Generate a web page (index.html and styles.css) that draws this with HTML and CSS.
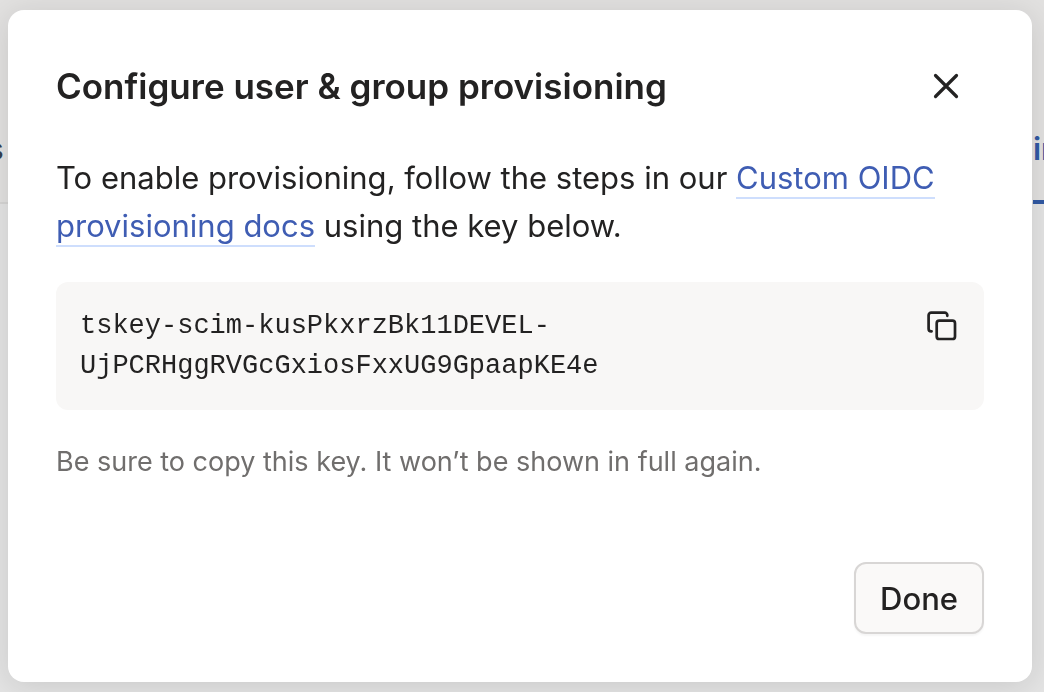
FILE: index.html
```html
<!DOCTYPE html>
<html lang="en">
<head>
    <meta charset="UTF-8">
    <meta name="viewport" content="width=device-width, initial-scale=1.0">
    <title>Configure user &amp; group provisioning</title>
    <link rel="stylesheet" href="styles.css">
</head>
<body>
    <nav class="tabs">
        <a class="tab" href="#">s</a>
        <a class="tab tab-active" href="#">in</a>
    </nav>
    <div class="overlay">
        <div class="dialog" role="dialog" aria-labelledby="dialogTitle">
            <header class="dialog-header">
                <h1 id="dialogTitle">Configure user &amp; group provisioning</h1>
                <button type="button" class="icon-button close-button" aria-label="Close">
                    <svg width="28" height="28" viewBox="0 0 28 28" fill="none" stroke="currentColor" stroke-width="3.2" stroke-linecap="round">
                        <path d="M3.5 3.5l21 21M24.5 3.5l-21 21"/>
                    </svg>
                </button>
            </header>
            <p class="intro">To enable provisioning, follow the steps in our <a href="#">Custom OIDC provisioning docs</a> using the key below.</p>
            <div class="key-box">
                <code>tskey-scim-kusPkxrzBk11DEVEL-<wbr>UjPCRHggRVGcGxiosFxxUG9GpaapKE4e</code>
                <button type="button" class="icon-button" aria-label="Copy key">
                    <svg width="32" height="32" viewBox="0 0 32 32" fill="none" stroke="currentColor" stroke-width="2.7" stroke-linecap="round" stroke-linejoin="round">
                        <rect x="10.7" y="10.7" width="18.3" height="18.3" rx="2.6"/>
                        <path d="M5.6 21.3H5.2a2.6 2.6 0 0 1-2.6-2.6V5.2a2.6 2.6 0 0 1 2.6-2.6h13.5a2.6 2.6 0 0 1 2.6 2.6v.6"/>
                    </svg>
                </button>
            </div>
            <p class="note">Be sure to copy this key. It won’t be shown in full again.</p>
            <footer class="dialog-footer">
                <button type="button" class="button">Done</button>
            </footer>
        </div>
    </div>
</body>
</html>
```
FILE: styles.css
```css
* {
    box-sizing: border-box;
}
body {
    font-family: Inter, sans-serif;
    font-size: 31px;
    color: #232222;
    background-color: #e4e4e4;
    margin: 0;
    overflow: hidden;
}
h1, p {
    margin: 0;
}
.tabs {
    display: flex;
    justify-content: space-between;
    margin: 0 -16px 0 -13px;
    padding-top: 124px;
    background-color: #e2e1e0;
    border-bottom: 2px solid #d6d5d4;
}
.tab {
    height: 80px;
    margin-bottom: -2px;
    line-height: 50px;
    font-weight: 500;
    color: #353f4f;
    text-decoration: none;
}
.tab-active {
    font-weight: 600;
    color: #3159a3;
    border-bottom: 4px solid #3159a3;
}
.overlay {
    position: fixed;
    inset: 0;
    padding: 10px 12px 10px 8px;
}
.dialog {
    padding: 48px;
    background: #fff;
    border-radius: 16px;
    box-shadow: 0 4px 32px rgba(0, 0, 0, 0.12);
}
.dialog-header {
    display: flex;
    justify-content: space-between;
    align-items: center;
    margin-bottom: 40px;
}
.dialog-header h1 {
    font-size: 35px;
    font-weight: 600;
    line-height: 56px;
}
.icon-button {
    display: flex;
    padding: 0;
    border: none;
    background: none;
    color: inherit;
    cursor: pointer;
}
.close-button {
    margin-right: 24px;
}
.intro {
    line-height: 48px;
    margin-bottom: 32px;
}
.intro a {
    color: #3f5db3;
    text-decoration: none;
    border-bottom: 2px solid #cedefd;
    padding-bottom: 1px;
}
.key-box {
    display: flex;
    justify-content: space-between;
    align-items: flex-start;
    padding: 24px;
    border-radius: 12px;
    background-color: #f8f7f6;
    margin-bottom: 32px;
}
.key-box code {
    max-width: 640px;
    font-family: "Liberation Mono", monospace;
    font-size: 27px;
    line-height: 40px;
}
.key-box .icon-button {
    padding: 4px 2px;
}
.note {
    font-size: 27px;
    line-height: 40px;
    color: #706e6d;
    margin-bottom: 80px;
}
.dialog-footer {
    display: flex;
    justify-content: flex-end;
}
.button {
    height: 72px;
    padding: 0 24px;
    font-family: inherit;
    font-size: 31px;
    font-weight: 500;
    color: inherit;
    background-color: #faf9f8;
    border: 2px solid #d8d6d5;
    border-radius: 12px;
    box-shadow: 0 2px 2px rgba(0, 0, 0, 0.04);
    cursor: pointer;
}
```
